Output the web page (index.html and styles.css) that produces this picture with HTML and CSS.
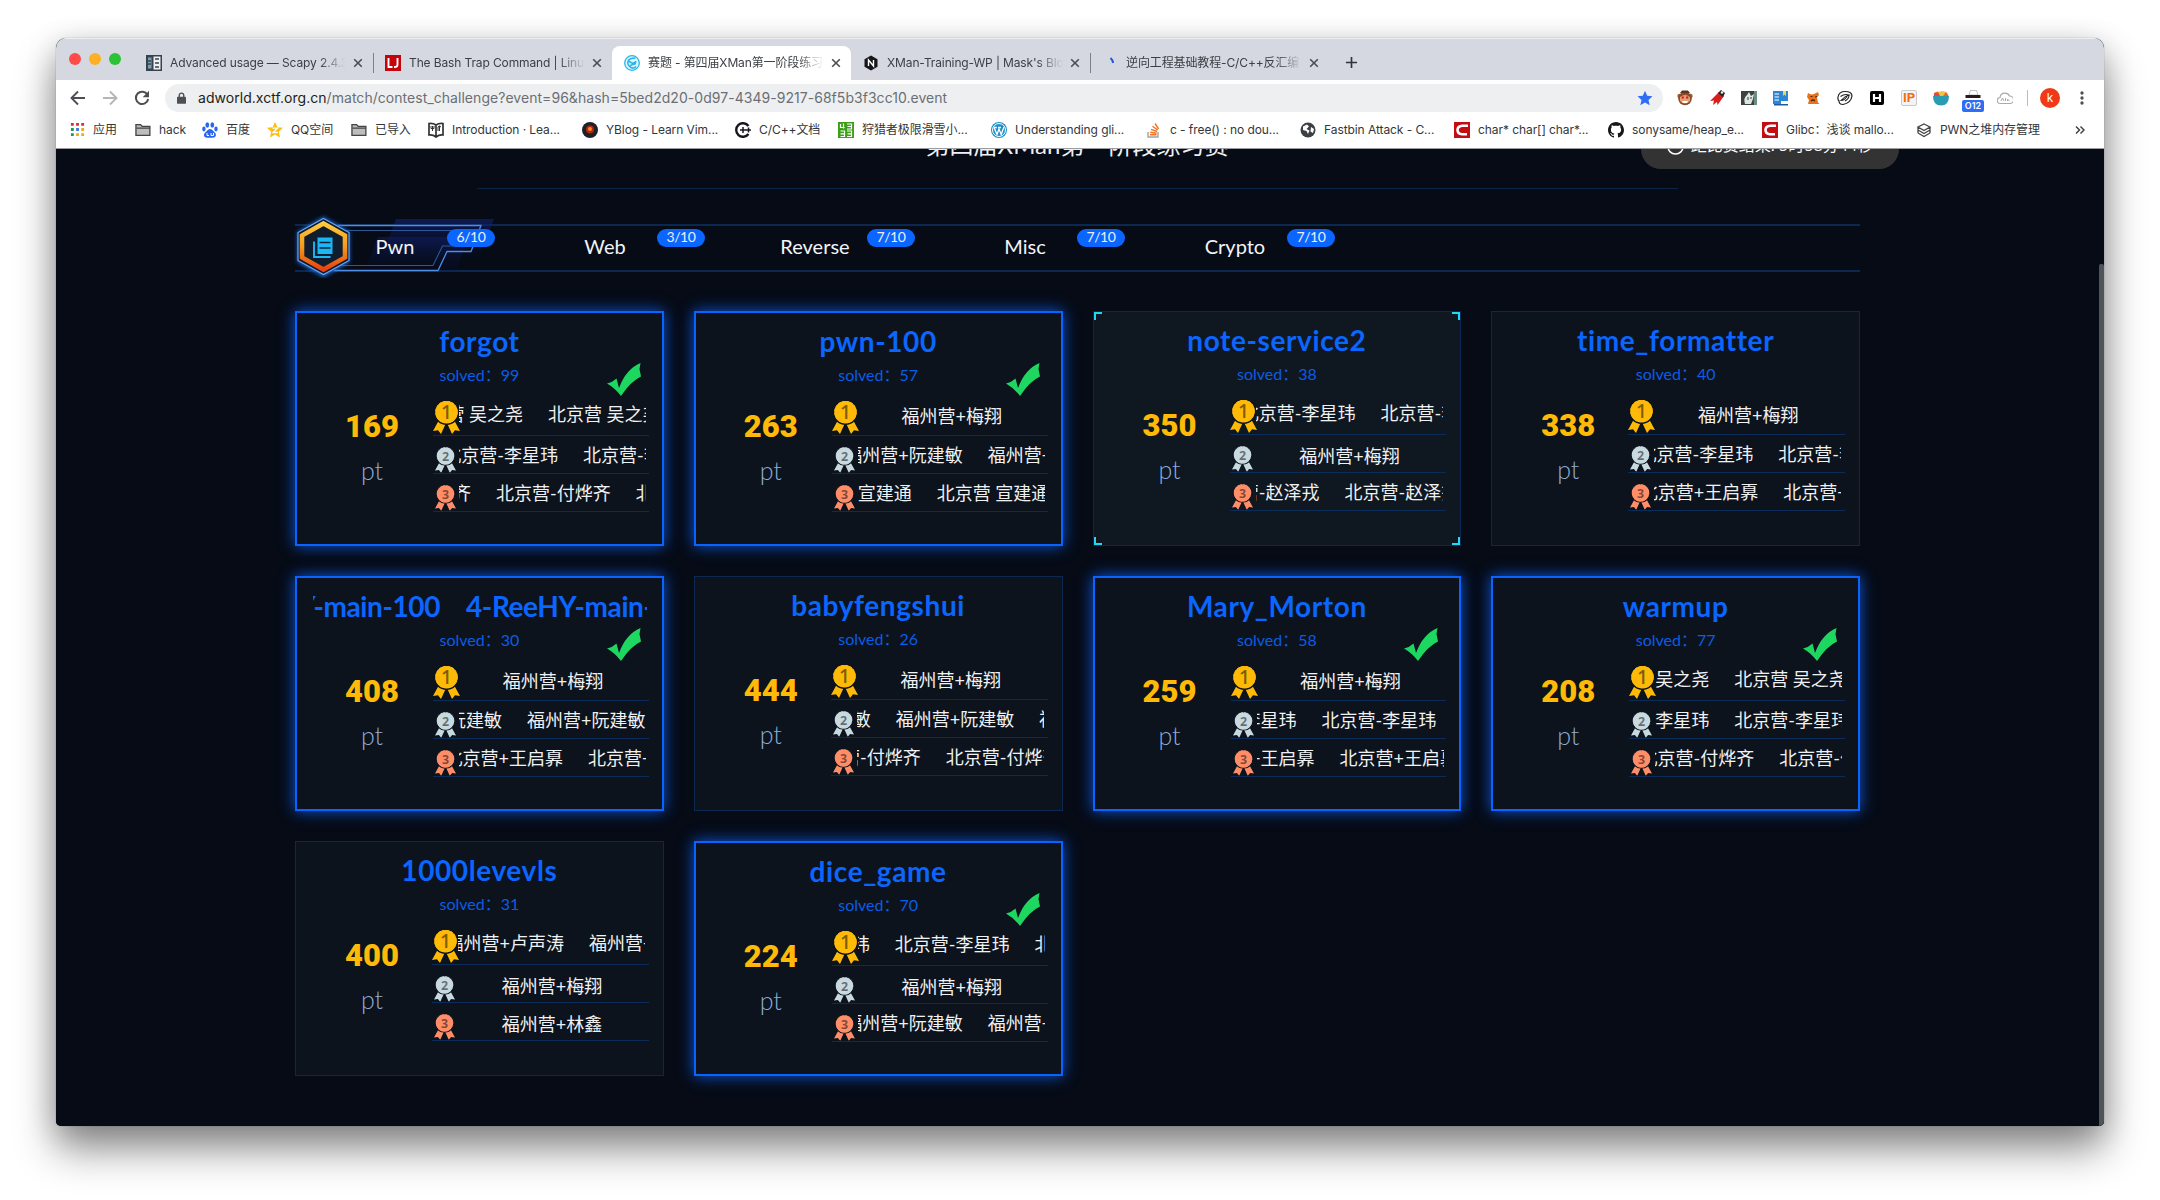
FILE: index.html
```html
<!DOCTYPE html>
<html lang="zh-CN">
<head>
<meta charset="utf-8">
<title>赛题 - 第四届XMan第一阶段练习赛</title>
<link rel="stylesheet" href="styles.css">
</head>
<body>
<svg class="defs" width="0" height="0" aria-hidden="true">
  <symbol id="x" viewBox="0 0 10 10"><path d="M1.2 1.2l7.6 7.6M8.8 1.2l-7.6 7.6" stroke="#4a4d52" stroke-width="1.6" fill="none"/></symbol>
  <symbol id="folder" viewBox="0 0 17 16"><path d="M1 2.2h5l1.6 2H15.800v9.600H1z" fill="#bdbdbd" stroke="#444" stroke-width="1.400"/><path d="M1.500 6h14.500" stroke="#444" stroke-width="1.200"/></symbol>
  <symbol id="csdn" viewBox="0 0 16 16"><path d="M0 0h16v16H0z" fill="#c30d12"/><path d="M14 3.800H8.500Q3.500 4.200 3.500 8t4.600 4.300H13" fill="none" stroke="#fff" stroke-width="2.600"/></symbol>
  <symbol id="ribbon" viewBox="0 0 27 33">
    <path d="M6 19L0 30l5-.8 3 3.800 5.500-12 5.500 12 3-3.800 5 .8-6-11z"/>
    <circle cx="13.500" cy="11.300" r="12" stroke="#0c131c" stroke-width="1.500"/>
    <circle cx="13.500" cy="11" r="10.600" fill="none" stroke="currentColor" stroke-width="1.200" stroke-dasharray="2.800 1.400"/>
  </symbol>
  <symbol id="m1" viewBox="0 0 27 33"><use href="#ribbon" fill="#ffba08" color="#ffba08"/><text x="13.500" y="18" class="medal-n first">1</text></symbol>
  <symbol id="m2" viewBox="0 0 27 33"><use href="#ribbon" fill="#c8d9e0" color="#c8d9e0"/><text x="13.500" y="17.500" class="medal-n">2</text></symbol>
  <symbol id="m3" viewBox="0 0 27 33"><use href="#ribbon" fill="#ff8e68" color="#ff8e68"/><text x="13.500" y="17.500" class="medal-n">3</text></symbol>
  <symbol id="check" viewBox="0 0 34 33"><path d="M0 20.500Q6 19 9.500 15.500L12 25Q19 6 33.500 0L32.500 6l1.500 7.500Q24 18 14 33 8 25 0 20.500z" fill="#1ed760"/></symbol>
</svg>

<div class="window">
  <div class="tabstrip">
    <div class="lights"><i class="red"></i><i class="yellow"></i><i class="green"></i></div>
    <div class="tab">
      <svg class="fav" viewBox="0 0 16 16"><path d="M0 0h16v16H0z" fill="#37424c"/><path d="M2 2.500h3.500v11H2z" fill="#7da0b8"/><path d="M7.500 1.500h7v13h-7z" fill="#eef1f4"/><path d="M9 4h4M9 8h4M9 12h4M10 6v0M2 6h3M2 9h3" stroke="#37424c" stroke-width="1.500"/></svg>
      <span class="t">Advanced usage — Scapy 2.4.3.</span><svg class="close"><use href="#x"/></svg>
    </div>
    <div class="tab">
      <svg class="fav" viewBox="0 0 16 16"><path d="M0 0h16v16H0z" fill="#c4050b"/><path d="M3.500 3v9h4M12.500 3v6.500q0 2.500-2.500 2.500H9" fill="none" stroke="#fff" stroke-width="1.900"/></svg>
      <span class="t">The Bash Trap Command | Linux</span><svg class="close"><use href="#x"/></svg>
    </div>
    <div class="tab active">
      <svg class="fav" viewBox="0 0 16 16"><circle cx="8" cy="8" r="7.300" fill="#dff4fc" stroke="#27b5ea" stroke-width="1.300"/><path d="M11.500 3Q5 3 4 6.500T7 12.500q3 1.500 5-1M4.500 6l4 2.500 4-2M6 10.500l6-2" fill="none" stroke="#27b5ea" stroke-width="1.500"/></svg>
      <span class="t">赛题 - 第四届XMan第一阶段练习赛</span><svg class="close"><use href="#x"/></svg>
    </div>
    <div class="tab">
      <svg class="fav" viewBox="0 0 16 16"><path d="M8 .5l6.500 3.800v7.400L8 15.500 1.500 11.700V4.300z" fill="#15171a"/><path d="M5.500 11V5l5 6V5" fill="none" stroke="#fff" stroke-width="1.400"/></svg>
      <span class="t">XMan-Training-WP | Mask's Blog</span><svg class="close"><use href="#x"/></svg>
    </div>
    <div class="tab">
      <svg class="fav" viewBox="0 0 16 16"><path d="M8.500 3q2.500 2 2.500 5" fill="none" stroke="#1a56db" stroke-width="2"/></svg>
      <span class="t">逆向工程基础教程-C/C++反汇编</span><svg class="close"><use href="#x"/></svg>
    </div>
    <svg class="plus" viewBox="0 0 14 14"><path d="M7 1v12M1 7h12" stroke="#303338" stroke-width="1.800"/></svg>
  </div>

  <div class="toolbar">
    <svg viewBox="0 0 16 16"><path d="M15 8H2M8 1.500L1.500 8 8 14.500" fill="none" stroke="#4c4f54" stroke-width="1.900"/></svg>
    <svg viewBox="0 0 16 16"><path d="M1 8h13M8 1.500L14.500 8 8 14.500" fill="none" stroke="#b4b6b9" stroke-width="1.900"/></svg>
    <svg viewBox="0 0 16 16"><path d="M13.500 4.800A6.200 6.200 0 1 0 14.200 9" fill="none" stroke="#4c4f54" stroke-width="2"/><path d="M15 .8v6.400H8.700z" fill="#4c4f54"/></svg>
    <div class="omnibox">
      <svg class="lock" viewBox="0 0 10 13"><rect y="5" width="10" height="8" rx="1" fill="#4c4f54"/><path d="M2.500 6V3.500a2.500 2.500 0 0 1 5 0V6" fill="none" stroke="#4c4f54" stroke-width="1.500"/></svg>
      <span class="url"><b>adworld.xctf.org.cn</b>/match/contest_challenge?event=96&amp;hash=5bed2d20-0d97-4349-9217-68f5b3f3cc10.event</span>
      <svg class="star" viewBox="0 0 16 16"><path d="M8 .8l2.200 5 5.300.5-4 3.600 1.200 5.300L8 12.400l-4.700 2.800 1.200-5.300-4-3.600 5.300-.5z" fill="#2f6df6"/></svg>
    </div>
    <div class="exts">
      <svg viewBox="0 0 16 16"><circle cx="2.500" cy="6" r="2.200" fill="#a5613a"/><circle cx="13.500" cy="6" r="2.200" fill="#a5613a"/><circle cx="8" cy="8.500" r="6.800" fill="#8a4a2c"/><path d="M3 7q5-4 10 0v4q-5 5-10 0z" fill="#e2a072"/><circle cx="5.800" cy="7.500" r="1.200" fill="#d22"/><circle cx="10.200" cy="7.500" r="1.200" fill="#d22"/><path d="M5 11h6l-1 2H6z" fill="#fff"/><path d="M3 3h10L11 .5H5z" fill="#5c3320"/></svg>
      <svg viewBox="0 0 16 16"><path d="M10 2L1 11l4-.5L4 15l4-3 .5 3 6.500-9z" fill="#d91c1c"/><path d="M9 3l5 4 2-4-4-3z" fill="#222"/><circle cx="13" cy="2.500" r="1.300" fill="#eee"/></svg>
      <svg viewBox="0 0 16 16"><path d="M0 1h16v14H0z" fill="#3c4244"/><path d="M4 14Q2 8 6 5l2-3 2 4 3-2-1 5-2 5z" fill="#dfe6e2"/><path d="M7 7v3M10 7v2M12 12l2-7" stroke="#4a5a52" stroke-width="1.200"/><path d="M13 1h3v14h-3z" fill="#6b8f80"/></svg>
      <svg viewBox="0 0 16 16"><path d="M0 1h8v13H0zM8 1h7v10H8z" fill="#2d85d6"/><path d="M1.500 4H6M1.500 7H6M1.500 10H6M9 13h5" stroke="#fff" stroke-width="1.200"/><path d="M10 1h3v5l-1.500-1.500L10 6z" fill="#f2dc3c"/><path d="M1 14.800h14" stroke="#1c5c9c" stroke-width="1.400"/></svg>
      <svg viewBox="0 0 16 16"><path d="M3 3l3 1.500 3-.5 4-2 1 3-2 2.500 1 5 1.500 1.500H3l1-4-2-3z" fill="#e8711c"/><path d="M5.500 6.500h2M10 7l2-.5M6 11q2-2 4 0" stroke="#4c2a12" stroke-width="1.200" fill="none"/></svg>
      <svg viewBox="0 0 16 16"><path d="M1 7Q2 1.500 8 1.500q7 0 7 4.500-1 7-9 8.500-4 0-4-3.500Q.5 9.500 1 7z" fill="#fff" stroke="#222" stroke-width="1.200"/><path d="M3.500 6.500q4-3 8.500-1.500-4 1-8 5.500 3.500 0 6-4M12 5q0 4-4 6" fill="none" stroke="#222" stroke-width="1.100"/></svg>
      <svg viewBox="0 0 16 16"><rect x="1" y="1" width="14" height="14" rx="2" fill="#000"/><path d="M5 4v8M11 4v8M5 8h6" stroke="#fff" stroke-width="2.200"/></svg>
      <span class="ip">IP</span>
      <svg viewBox="0 0 16 16"><path d="M.5 6Q1 1 5 1.500T8 1q7 0 7.500 5z" fill="#f3c242"/><path d="M1 6V3l4-1 2 4z" fill="#e04a3a"/><path d="M10 6l3-4 2.500 4z" fill="#e8632e"/><path d="M0 6h16q0 9.500-8 9.500T0 6z" fill="#2a9bb0"/></svg>
      <span class="badge-ext"><svg viewBox="0 0 16 8"><path d="M4 5L5.500.5h6L13 5z" fill="#fff" stroke="#999" stroke-width=".6"/><path d="M.5 5h15v3H.5z" fill="#2b1a1c"/></svg><em>O12</em></span>
      <svg viewBox="0 0 16 16"><path d="M3.500 13.500a3 3 0 0 1-.5-6A5 5 0 0 1 12.500 6a3.700 3.700 0 0 1 .5 7.500z" fill="none" stroke="#aaa" stroke-width="1.200"/><path d="M4 11l1.500-3L7 11M8.500 8v3M10.500 11V9l2 2" fill="none" stroke="#aaa"/></svg>
    </div>
    <i class="vsep"></i>
    <span class="avatar">k</span>
    <svg class="menu" viewBox="0 0 16 16"><circle cx="8" cy="2.300" r="1.900"/><circle cx="8" cy="8" r="1.900"/><circle cx="8" cy="13.700" r="1.900"/></svg>
  </div>

  <div class="bookmarks">
    <div class="bm apps"><svg viewBox="0 0 16 16"><g fill="#dd2c2c"><path d="M1 1h3v3H1zM6.500 1h3v3h-3zM12 1h3v3h-3z"/></g><path d="M1 6.500h3v3H1zM1 12h3v3H1z" fill="#189a50"/><path d="M6.500 6.500h3v3h-3z" fill="#3b78e7"/><path d="M12 6.500h3v3h-3zM6.500 12h3v3h-3zM12 12h3v3h-3z" fill="#f0a818"/></svg><span>应用</span></div>
    <div class="bm"><svg><use href="#folder"/></svg><span>hack</span></div>
    <div class="bm"><svg viewBox="0 0 16 16" fill="#2a65f0"><ellipse cx="5.300" cy="3" rx="1.900" ry="2.700"/><ellipse cx="10.300" cy="3" rx="1.900" ry="2.700"/><ellipse cx="1.900" cy="7" rx="1.700" ry="2.400"/><ellipse cx="14" cy="7" rx="1.700" ry="2.400"/><path d="M8 7c2.500 0 3.500 2.500 5 3.800 2 2 .5 5-2 5H5c-3 0-4-3-2-5C4.500 9.500 5.500 7 8 7z"/><path d="M5 11v2.500h2M9 11v2.500h2.500V11" fill="none" stroke="#fff"/></svg><span>百度</span></div>
    <div class="bm"><svg viewBox="0 0 16 16"><path d="M8 0l2.400 5.200 5.600.6-4.200 3.900L13 15.500 8 12.600 3 15.500l1.200-5.800L0 5.800l5.600-.6z" fill="#fdbd10"/><path d="M5.500 6.200h5L6 10.500h5" fill="none" stroke="#fff" stroke-width="1.300"/></svg><span>QQ空间</span></div>
    <div class="bm"><svg><use href="#folder"/></svg><span>已导入</span></div>
    <div class="bm"><svg viewBox="0 0 16 16"><path d="M8 3Q5 1 1 1.500v11.500q4-.5 7 2 3-2.500 7-2V1.500Q11 1 8 3zv11" fill="none" stroke="#333" stroke-width="1.700"/><path d="M4.500 4v5M3 4v2.500h3V4M11.500 4v5M10 9V5l1.500-1L13 5" fill="none" stroke="#333"/></svg><span>Introduction · Lea...</span></div>
    <div class="bm"><svg viewBox="0 0 16 16"><circle cx="8" cy="8" r="8" fill="#1b2029"/><circle cx="8" cy="7.500" r="4" fill="#b3260d"/><circle cx="8" cy="7" r="2" fill="#ff8a2a"/></svg><span>YBlog - Learn Vim...</span></div>
    <div class="bm"><svg viewBox="0 0 16 16"><path d="M13.500 4A6.800 6.800 0 1 0 13.500 12" fill="none" stroke="#15171c" stroke-width="2.400"/><path d="M5 8h6M8 5v6M11 8h5M13.500 5.500v5" stroke="#15171c" stroke-width="1.500"/></svg><span>C/C++文档</span></div>
    <div class="bm"><svg viewBox="0 0 16 16"><path d="M0 0h16v16H0z" fill="#3d9e18"/><path d="M2.500 2v3.500h4M5.500 1.500v5M9 2h4.500v5H9M9.500 4.500h4M2.500 9h4v5.500h-4M2.500 11.800h4M9 9h4.500v5.500H9M9.500 11.800h4" fill="none" stroke="#fff" stroke-width="1.200"/></svg><span>狩猎者极限滑雪小...</span></div>
    <div class="bm"><svg viewBox="0 0 16 16"><circle cx="8" cy="8" r="8" fill="#1d8fc4"/><circle cx="8" cy="8" r="6.500" fill="none" stroke="#fff"/><path d="M3 5.500l3 7L8 7l2.200 5.500L13 5M2.800 5.500h3M7 5.500h3" fill="none" stroke="#fff" stroke-width="1.300"/></svg><span>Understanding gli...</span></div>
    <div class="bm"><svg viewBox="0 0 16 16"><path d="M2 10v5h10v-5" fill="none" stroke="#a0a4a8" stroke-width="1.400"/><path d="M4 12.800h6.500M4.200 10.300l6.400.9M5 7.300l6 2.200M6.500 4.300l5.200 3.700M9 1.500l3.500 5.300" stroke="#f2701d" stroke-width="1.400"/></svg><span>c - free() : no dou...</span></div>
    <div class="bm"><svg viewBox="0 0 16 16"><circle cx="8" cy="8" r="7.500" fill="#3c3f44"/><path d="M3 4.500l4-2 2 2-2.500 2.500 3 1.500L8 12l-1.500-3L3 8zM11 5l3 2-1 4-2.500-1.500z" fill="#fff"/></svg><span>Fastbin Attack - C...</span></div>
    <div class="bm"><svg><use href="#csdn"/></svg><span>char* char[] char*...</span></div>
    <div class="bm"><svg viewBox="0 0 16 16"><path d="M8 0C3.600 0 0 3.600 0 8c0 3.500 2.300 6.500 5.500 7.600.4.100.5-.2.500-.4v-1.400c-2.200.5-2.700-1-2.700-1-.4-.9-.9-1.200-.9-1.200-.7-.5.100-.5.100-.5.800.1 1.200.8 1.200.8.700 1.300 1.900.9 2.300.7.100-.5.300-.9.500-1.100-1.800-.2-3.600-.9-3.600-4 0-.9.300-1.600.8-2.100-.1-.2-.4-1 .1-2.100 0 0 .7-.2 2.200.8.600-.2 1.300-.3 2-.3s1.400.1 2 .3c1.500-1 2.200-.8 2.200-.8.400 1.100.200 1.900.100 2.100.5.600.8 1.300.8 2.100 0 3.100-1.900 3.700-3.700 3.900.3.300.6.800.6 1.500v2.200c0 .2.100.5.600.4C13.700 14.500 16 11.500 16 8c0-4.400-3.600-8-8-8z" fill="#191717"/></svg><span>sonysame/heap_e...</span></div>
    <div class="bm"><svg><use href="#csdn"/></svg><span>Glibc：浅谈 mallo...</span></div>
    <div class="bm"><svg viewBox="0 0 16 16"><path d="M8 2l6 3-6 3.500L2 5zM2 8l6 3.500L14 8M2 11l6 3.500 6-3.500M2 5v6M14 5v6" fill="none" stroke="#444" stroke-width="1.300"/></svg><span>PWN之堆内存管理</span></div>
    <svg class="more" viewBox="0 0 10 10"><path d="M1 1.500L4.500 5 1 8.500M5.500 1.500L9 5 5.500 8.500" fill="none" stroke="#444" stroke-width="1.500"/></svg>
  </div>

  <div class="page">
    <header class="top">
      <h1>第四届XMan第一阶段练习赛</h1>
      <div class="timer"><svg viewBox="0 0 18 18"><circle cx="9" cy="9" r="8" fill="none" stroke="#fff" stroke-width="1.600"/><path d="M9 4v5h4" fill="none" stroke="#fff" stroke-width="1.400"/></svg><span>距比赛结束: 5时58分44秒</span></div>
    </header>
    <hr class="rule">

    <nav class="cats">
      <svg class="deco" viewBox="0 0 210 64">
        <defs>
          <linearGradient id="pg" x1="0" y1="0" x2="0" y2="1"><stop offset="0" stop-color="#13247a" stop-opacity=".6"/><stop offset="1" stop-color="#0a1240" stop-opacity="0"/></linearGradient>
          <linearGradient id="hg" x1="0" y1="0" x2="0" y2="1"><stop offset="0" stop-color="#ffc93a"/><stop offset=".5" stop-color="#f59b1c"/><stop offset="1" stop-color="#e8430e"/></linearGradient>
          <filter id="gl" x="-30%" y="-30%" width="160%" height="160%"><feGaussianBlur stdDeviation="2"/></filter>
        </defs>
        <path d="M106 5h98l-16 42H90z" fill="url(#pg)"/>
        <path d="M88 23h90l-14 41H72z" fill="url(#pg)" opacity=".7"/>
        <path d="M48 11.500h143l-10 26h-24l-9 19H44" fill="none" stroke="#4f8de8" stroke-width="1.300"/>
        <path d="M54 16.500h135M46 51.500h97l9.500-19.500h28" fill="none" stroke="#2e5793" stroke-width="1.100"/>
        <path d="M33.500 3l26 15v30l-26 15-26-15V18z" fill="#1d6fe0" filter="url(#gl)"/>
        <path d="M33.500 4.500l25.500 14v28l-25.500 14L8 46.500v-28z" fill="#0a1830" stroke="#6aa6f2" stroke-width="1.200"/>
        <path d="M33.500 9.500l21.500 12v22l-21.500 12L12 43.500v-22z" fill="#101d2e" stroke="url(#hg)" stroke-width="4.600"/>
        <path d="M27.500 23.500h15v16.500h-15z" fill="#1ab7f5"/><path d="M29.500 28.500h11M29.500 34h11" stroke="#0f2438" stroke-width="1.500"/><path d="M24 27.500v15.500h16.500" fill="none" stroke="#1ab7f5" stroke-width="1.900"/>
      </svg>
      <a>Pwn<sup>6/10</sup></a><a>Web<sup>3/10</sup></a><a>Reverse<sup>7/10</sup></a><a>Misc<sup>7/10</sup></a><a>Crypto<sup>7/10</sup></a>
    </nav>

    <main class="grid">
      <article class="card done">
        <h2>forgot</h2><p class="solved">solved：99</p><svg class="tick"><use href="#check"/></svg>
        <div class="score"><b>169</b><span>pt</span></div>
        <ol>
          <li><svg><use href="#m1"/></svg><div class="mq" style="--lead:64px"><span>北京营 吴之尧</span><span>北京营 吴之尧</span></div></li>
          <li><svg><use href="#m2"/></svg><div class="mq" style="--lead:99px"><span>北京营-李星玮</span><span>北京营-李星玮</span></div></li>
          <li><svg><use href="#m3"/></svg><div class="mq" style="--lead:12px"><span>北京营-付烨齐</span><span>北京营-付烨齐</span><span>北京营-付烨齐</span></div></li>
        </ol>
      </article>
      <article class="card done">
        <h2>pwn-100</h2><p class="solved">solved：57</p><svg class="tick"><use href="#check"/></svg>
        <div class="score"><b>263</b><span>pt</span></div>
        <ol>
          <li><svg><use href="#m1"/></svg><div class="st">福州营+梅翔</div></li>
          <li><svg><use href="#m2"/></svg><div class="mq" style="--lead:105px"><span>福州营+阮建敏</span><span>福州营+阮建敏</span></div></li>
          <li><svg><use href="#m3"/></svg><div class="mq" style="--lead:54px"><span>北京营 宣建通</span><span>北京营 宣建通</span></div></li>
        </ol>
      </article>
      <article class="card hover">
        <i class="c tl"></i><i class="c tr"></i><i class="c bl"></i><i class="c br"></i>
        <h2>note-service2</h2><p class="solved">solved：38</p>
        <div class="score"><b>350</b><span>pt</span></div>
        <ol>
          <li><svg><use href="#m1"/></svg><div class="mq" style="--lead:100px"><span>北京营-李星玮</span><span>北京营-李星玮</span></div></li>
          <li><svg><use href="#m2"/></svg><div class="st">福州营+梅翔</div></li>
          <li><svg><use href="#m3"/></svg><div class="mq" style="--lead:64px"><span>北京营-赵泽戎</span><span>北京营-赵泽戎</span></div></li>
        </ol>
      </article>
      <article class="card">
        <h2>time_formatter</h2><p class="solved">solved：40</p>
        <div class="score"><b>338</b><span>pt</span></div>
        <ol>
          <li><svg><use href="#m1"/></svg><div class="st">福州营+梅翔</div></li>
          <li><svg><use href="#m2"/></svg><div class="mq" style="--lead:99px"><span>北京营-李星玮</span><span>北京营-李星玮</span></div></li>
          <li><svg><use href="#m3"/></svg><div class="mq" style="--lead:104px"><span>北京营+王启奡</span><span>北京营+王启奡</span></div></li>
        </ol>
      </article>

      <article class="card done">
        <h2 class="mq" style="--lead:127px"><span>4-ReeHY-main-100</span><span>4-ReeHY-main-100</span></h2><p class="solved">solved：30</p><svg class="tick"><use href="#check"/></svg>
        <div class="score"><b>408</b><span>pt</span></div>
        <ol>
          <li><svg><use href="#m1"/></svg><div class="st">福州营+梅翔</div></li>
          <li><svg><use href="#m2"/></svg><div class="mq" style="--lead:43px"><span>福州营+阮建敏</span><span>福州营+阮建敏</span></div></li>
          <li><svg><use href="#m3"/></svg><div class="mq" style="--lead:104px"><span>北京营+王启奡</span><span>北京营+王启奡</span></div></li>
        </ol>
      </article>
      <article class="card">
        <h2>babyfengshui</h2><p class="solved">solved：26</p>
        <div class="score"><b>444</b><span>pt</span></div>
        <ol>
          <li><svg><use href="#m1"/></svg><div class="st">福州营+梅翔</div></li>
          <li><svg><use href="#m2"/></svg><div class="mq" style="--lead:14px"><span>福州营+阮建敏</span><span>福州营+阮建敏</span><span>福州营+阮建敏</span></div></li>
          <li><svg><use href="#m3"/></svg><div class="mq" style="--lead:64px"><span>北京营-付烨齐</span><span>北京营-付烨齐</span></div></li>
        </ol>
      </article>
      <article class="card done">
        <h2>Mary_Morton</h2><p class="solved">solved：58</p><svg class="tick"><use href="#check"/></svg>
        <div class="score"><b>259</b><span>pt</span></div>
        <ol>
          <li><svg><use href="#m1"/></svg><div class="st">福州营+梅翔</div></li>
          <li><svg><use href="#m2"/></svg><div class="mq" style="--lead:40px"><span>北京营-李星玮</span><span>北京营-李星玮</span></div></li>
          <li><svg><use href="#m3"/></svg><div class="mq" style="--lead:58px"><span>北京营+王启奡</span><span>北京营+王启奡</span></div></li>
        </ol>
      </article>
      <article class="card done">
        <h2>warmup</h2><p class="solved">solved：77</p><svg class="tick"><use href="#check"/></svg>
        <div class="score"><b>208</b><span>pt</span></div>
        <ol>
          <li><svg><use href="#m1"/></svg><div class="mq" style="--lead:54px"><span>北京营 吴之尧</span><span>北京营 吴之尧</span></div></li>
          <li><svg><use href="#m2"/></svg><div class="mq" style="--lead:54px"><span>北京营-李星玮</span><span>北京营-李星玮</span></div></li>
          <li><svg><use href="#m3"/></svg><div class="mq" style="--lead:99px"><span>北京营-付烨齐</span><span>北京营-付烨齐</span></div></li>
        </ol>
      </article>

      <article class="card">
        <h2>1000levevls</h2><p class="solved">solved：31</p>
        <div class="score"><b>400</b><span>pt</span></div>
        <ol>
          <li><svg><use href="#m1"/></svg><div class="mq" style="--lead:106px"><span>福州营+卢声涛</span><span>福州营+卢声涛</span></div></li>
          <li><svg><use href="#m2"/></svg><div class="st">福州营+梅翔</div></li>
          <li><svg><use href="#m3"/></svg><div class="st">福州营+林鑫</div></li>
        </ol>
      </article>
      <article class="card done">
        <h2>dice_game</h2><p class="solved">solved：70</p><svg class="tick"><use href="#check"/></svg>
        <div class="score"><b>224</b><span>pt</span></div>
        <ol>
          <li><svg><use href="#m1"/></svg><div class="mq" style="--lead:12px"><span>北京营-李星玮</span><span>北京营-李星玮</span><span>北京营-李星玮</span></div></li>
          <li><svg><use href="#m2"/></svg><div class="st">福州营+梅翔</div></li>
          <li><svg><use href="#m3"/></svg><div class="mq" style="--lead:105px"><span>福州营+阮建敏</span><span>福州营+阮建敏</span></div></li>
        </ol>
      </article>
    </main>
    <i class="scrollbar"></i>
  </div>
</div>
</body>
</html>
```
FILE: styles.css
```css
* { box-sizing: border-box; }
body { margin: 0; background: #fff; font-family: Inter, "Noto Sans CJK SC", sans-serif; padding: 38px 56px 74px; height: 1200px; overflow: hidden; }
svg { display: block; flex: none; }
.defs { position: absolute; }
i, em { font-style: normal; }

.window { height: 1088px; border-radius: 10px 10px 5px 5px; overflow: hidden; background: #060b16; display: flex; flex-direction: column; box-shadow: 0 0 1px rgba(0,0,0,.6), 0 24px 40px rgba(0,0,0,.42), 0 6px 30px rgba(0,0,0,.18); }

/* tab strip */
.tabstrip { height: 42px; background: #d5d8e0; display: flex; align-items: flex-end; border-top: 1px solid #eceef2; }
.lights { width: 78px; height: 42px; display: flex; gap: 8px; padding: 15px 0 0 13px; }
.lights i { width: 12px; height: 12px; border-radius: 50%; }
.red { background: #fc4b48; } .yellow { background: #fdb025; } .green { background: #2bc236; }
.tab { width: 239px; height: 34px; display: flex; align-items: center; padding: 0 10px 0 12px; position: relative; color: #3c4045; }
.tab + .tab:not(.active)::before { content: ""; position: absolute; left: 0; top: 7px; height: 20px; width: 1px; background: #7d8087; }
.tab.active + .tab::before { display: none; }
.tab.active { background: #fff; border-radius: 8px 8px 0 0; }
.fav { width: 16px; height: 16px; }
.tab .t { flex: 1; margin-left: 8px; font-size: 12px; letter-spacing: -.12px; white-space: nowrap; overflow: hidden; line-height: 20px; -webkit-mask-image: linear-gradient(90deg, #000 85%, transparent); mask-image: linear-gradient(90deg, #000 85%, transparent); }
.close { width: 10px; height: 10px; margin-left: 7px; }
.plus { width: 13px; height: 13px; margin: 0 0 11px 16px; }

/* toolbar */
.toolbar { height: 36px; background: #fff; display: flex; align-items: center; padding: 0 14px 0 14px; }
.toolbar > svg { width: 16px; height: 16px; margin-right: 16px; }
.omnibox { width: 1498px; height: 28px; margin-left: -1px; border-radius: 14px; background: #eeeff1; display: flex; align-items: center; padding: 0 10px 0 12px; }
.lock { width: 9px; height: 12px; }
.url { flex: 1; margin-left: 12px; font-size: 14px; line-height: 20px; color: #6b6f74; white-space: nowrap; letter-spacing: .04px; }
.url b { font-weight: 400; color: #1c1e21; }
.star { width: 16px; height: 16px; }
.exts { display: flex; gap: 16px; margin-left: 14px; align-items: center; }
.exts > svg { width: 16px; height: 16px; }
.ip { width: 16px; height: 16px; border: 1px solid #c9c9c9; border-radius: 2px; background: #f4f4f4; color: #f26c0c; font: 700 13px/14px Roboto, sans-serif; text-align: center; }
.badge-ext { width: 16px; height: 16px; position: relative; }
.badge-ext svg { width: 16px; height: 8px; }
.badge-ext em { position: absolute; left: -3px; top: 10px; width: 22px; height: 12px; border-radius: 2px; background: #2f6df6; color: #fff; font-size: 9px; line-height: 12px; text-align: center; font-weight: 600; }
.vsep { width: 1px; height: 16px; background: #bbb; margin: 0 12px 0 14px; }
.avatar { width: 20px; height: 20px; border-radius: 50%; background: #f03a17; color: #fff; font-size: 12px; line-height: 20px; text-align: center; margin-right: 15px; }
.toolbar > .menu { fill: #4c4f54; width: 14px; height: 14px; margin: 0; }

/* bookmarks */
.bookmarks { height: 33px; flex: none; background: #fff; border-bottom: 1px solid #9b9da1; display: grid; grid-template-columns: 65px 67px 65px 84px 77px 154px 153px 103px 153px 155px 154px 154px 154px 154px 154px 159px 10px; padding-left: 14px; align-items: center; padding-bottom: 5px; }
.bm { display: flex; align-items: center; font-size: 12px; color: #33363a; white-space: nowrap; }
.bm svg { width: 16px; height: 16px; }
.bm span { margin-left: 8px; line-height: 16px; letter-spacing: -.07px; }
.apps svg { width: 15px; height: 15px; }
.more { width: 10px; height: 10px; }

/* page */
.page { flex: 1; overflow: hidden; position: relative; font-family: Lato, "Noto Sans CJK SC", sans-serif; padding: 0 244px 0 239px; background: #060b16; }
.top { margin-top: -28px; height: 44px; display: grid; grid-template-columns: 1fr 258px; }
.top h1 { margin: 0; font-weight: 400; font-size: 24px; line-height: 47px; color: #eef0f3; text-align: center; padding-left: 257px; white-space: nowrap; }
.timer { margin-right: -39px; margin-left: 39px; background: #333; border-radius: 20px; display: flex; align-items: center; justify-content: center; gap: 7px; color: #fff; font-size: 16px; line-height: 48px; white-space: nowrap; }
.timer svg { width: 17px; height: 17px; margin-top: 3px; }
.rule { width: 1201px; height: 1px; border: 0; background: #0a2547; margin: 23px auto 0 182px; }
.cats { margin-top: 35px; height: 48px; border: 2px solid #0a2850; border-width: 2px 0; display: flex; position: relative; }
.cats a { width: 210px; position: relative; text-align: center; font-size: 20px; line-height: 41px; color: #f2f4f7; left: -5px; }
.cats sup { position: absolute; left: 157px; top: 3px; width: 48px; height: 18px; border-radius: 9px; background: #0b66ff; font-size: 14px; line-height: 16px; color: #e8effb; letter-spacing: -.4px; }
.deco { position: absolute; left: -5px; top: -12px; width: 210px; height: 64px; }

.grid { margin-top: 39px; display: grid; grid-template-columns: repeat(4, 1fr); grid-auto-rows: 235px; gap: 30px; }
.card { position: relative; border: 1px solid #0a2850; background: #0c131c; display: grid; grid-template: 56px 22px 1fr / 136px 1fr; }
.card.done { border: 2px solid #0b63ff; box-shadow: 0 0 14px #0b58e0; }
.card.hover { background: #0f1721; }
.card h2 { grid-column: 1 / 3; margin: 0 15px; text-align: center; font-size: 28px; line-height: 56px; font-weight: 700; color: #0b66ff; white-space: nowrap; letter-spacing: .6px; }
.solved { grid-column: 1 / 3; margin: -5px 0 0; text-align: center; font-size: 16px; line-height: 22px; color: #0b5ce6; }
.score { display: flex; flex-direction: column; align-items: center; padding: 16px 0 0 16px; }
.score b { font: 900 31px/40px Roboto, sans-serif; color: #ffba08; }
.score span { font-size: 25px; line-height: 30px; margin-top: 8px; color: #8fabd8; font-weight: 300; }
.card ol { margin: 7px 14px 0 0; padding: 0; list-style: none; }
.card.done .score { padding-left: 14px; }
.card.done ol { margin-right: 13px; margin-left: 0; }
.card li { height: 38px; border-bottom: 1px solid #0a2c58; display: grid; grid-template-columns: 26px 187px; color: #f0f1f3; font-size: 18px; line-height: 39px; }
.card li svg { width: 21px; height: 26px; margin: 11px 0 0 2px; }
.card li:first-child svg { width: 27px; height: 33px; margin: 3px 0 0 0; }
.mq { display: flex; overflow: hidden; gap: 25px; white-space: nowrap; }
.mq > span { flex: none; }
.mq > span:first-child { width: var(--lead); display: flex; justify-content: flex-end; overflow: hidden; }
.card h2.mq { gap: 26px; letter-spacing: -.4px; margin-left: 16px; }
.st { text-align: center; line-height: 43px; white-space: nowrap; padding-left: 1px; }
.card li:first-child { line-height: 33px; }
.card li:first-child .st { line-height: 36px; }
.tick { position: absolute; right: 21px; top: 50px; width: 34px; height: 33px; }
.medal-n { font: 700 16px "Open Sans", sans-serif; text-anchor: middle; fill: #000; fill-opacity: .5; }
.medal-n.first { font-size: 19px; font-weight: 600; }

.c { position: absolute; width: 8px; height: 8px; border: 0 solid #1fd8f5; }
.tl { left: 0; top: 0; border-width: 2px 0 0 2px; } .tr { right: 0; top: 0; border-width: 2px 2px 0 0; }
.bl { left: 0; bottom: 0; border-width: 0 0 2px 2px; } .br { right: 0; bottom: 0; border-width: 0 2px 2px 0; }
.scrollbar { position: absolute; right: 0; top: 115px; bottom: 0; width: 5px; background: #505358; border-radius: 2px 2px 0 0; }
```
